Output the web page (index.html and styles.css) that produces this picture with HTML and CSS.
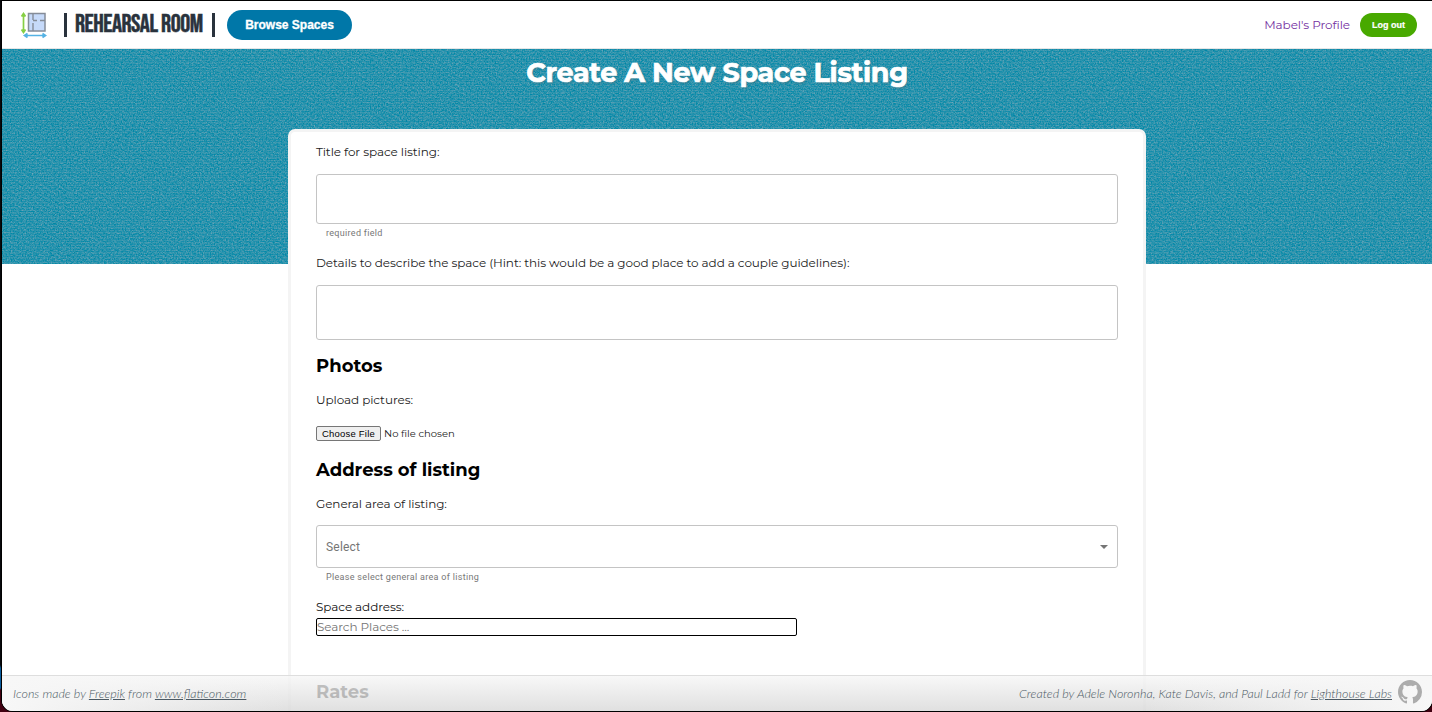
FILE: index.html
```html
<!DOCTYPE html>
<html lang="en">
<head>
<meta charset="utf-8">
<title>Rehearsal Room</title>
<link rel="stylesheet" href="styles.css">
</head>
<body>
<div class="window">
  <header class="navbar">
    <svg class="logo" viewBox="0 0 28 28" fill="none">
      <rect x="9.500" y="1.500" width="16.500" height="17.500" fill="#c6dafa" stroke="#858c98" stroke-width="1.500"/>
      <path d="M14 1v7m0 3v8M14 8.500h4m3 0h5" stroke="#858c98" stroke-width="1.400"/>
      <path d="M4.500 2v18M2.500 4.500l2-3 2 3M2.500 17.500l2 3 2-3" stroke="#86cf45" stroke-width="1.700"/>
      <path d="M6 23.500h20M8.500 21.500l-3 2 3 2M23.500 21.500l3 2-3 2" stroke="#55b2e4" stroke-width="1.700"/>
    </svg>
    <div class="brand"><span class="bar"></span><span class="brand-box"><span class="brand-name">REHEARSAL ROOM</span></span><span class="bar"></span></div>
    <button class="button browse">Browse Spaces</button>
    <a class="profile">Mabel's Profile</a>
    <button class="button logout">Log out</button>
  </header>
  <main class="page">
    <svg class="texture" width="1430" height="215">
      <filter id="weave" x="0" y="0" width="100%" height="100%" color-interpolation-filters="sRGB">
        <feTurbulence type="fractalNoise" baseFrequency=".73 .77" numOctaves="3" seed="4"/>
        <feColorMatrix values=".7 0 0 0 -.18  .18 0 0 0 .49  .12 0 0 0 .62  0 0 0 0 1"/>
      </filter>
      <pattern id="threads" width="8" height="5" patternUnits="userSpaceOnUse">
        <path d="M0 .5h5M3 2.500h5" stroke="#0086ad" stroke-opacity=".4"/>
        <path d="M1 3.500h4M5 1.500h3" stroke="#65a4b5" stroke-opacity=".3"/>
      </pattern>
      <rect width="1430" height="215" filter="url(#weave)"/>
      <rect width="1430" height="215" fill="url(#threads)"/>
    </svg>
    <h1 class="title">Create A New Space Listing</h1>
    <form class="card">
      <label class="label w-title">Title for space listing:</label>
      <div class="field field-title"></div>
      <p class="help w-required">required field</p>
      <label class="label w-details">Details to describe the space (Hint: this would be a good place to add a couple guidelines):</label>
      <div class="field field-details"></div>
      <h2 class="section photos">Photos</h2>
      <label class="label w-upload">Upload pictures:</label>
      <div class="file"><button class="choose" type="button">Choose File</button><span class="filename">No file chosen</span></div>
      <h2 class="section address">Address of listing</h2>
      <label class="label w-area">General area of listing:</label>
      <div class="field select"><span>Select</span><i class="caret"></i></div>
      <p class="help w-please">Please select general area of listing</p>
      <label class="label w-space">Space address:</label>
      <div class="search"><span>Search Places ...</span></div>
      <h2 class="section rates">Rates</h2>
    </form>
  </main>
  <footer class="footer">
    <p class="credit left">Icons made by <a>Freepik</a> from <a>www.flaticon.com</a></p>
    <p class="credit right">Created by Adele Noronha, Kate Davis, and Paul Ladd for <a>Lighthouse Labs</a></p>
    <svg class="github" viewBox="0 0 16 16"><path fill="#acacac" d="M8 0C3.580 0 0 3.580 0 8c0 3.540 2.290 6.530 5.470 7.590.4.070.55-.17.55-.38 0-.19-.01-.82-.01-1.490-2.010.37-2.530-.49-2.690-.94-.09-.23-.48-.94-.82-1.130-.28-.15-.68-.52-.01-.53.63-.01 1.080.58 1.230.82.72 1.210 1.870.87 2.330.66.07-.52.28-.87.51-1.070-1.780-.2-3.640-.89-3.640-3.950 0-.87.31-1.590.82-2.150-.08-.2-.36-1.020.08-2.120 0 0 .67-.21 2.200.82A7.600 7.600 0 0 1 8 3.860c.68 0 1.360.09 2 .27 1.530-1.040 2.200-.82 2.200-.82.44 1.100.16 1.920.08 2.120.51.56.82 1.270.82 2.150 0 3.070-1.870 3.750-3.650 3.950.29.25.54.73.54 1.480 0 1.070-.01 1.930-.01 2.200 0 .21.15.46.55.38A8.010 8.010 0 0 0 16 8c0-4.420-3.580-8-8-8z"/></svg>
  </footer>
</div>
</body>
</html>
```
FILE: styles.css
```css
* { box-sizing: border-box; }
body { margin: 0; width: 1432px; height: 712px; overflow: hidden; background: linear-gradient(#08090c 665px, #075a9b 668px 688px, #400010 690px); font-family: Montserrat, Inter, sans-serif; color: #222; }
h1, h2, p { margin: 0; }
.window { margin: 1px 0 0 2px; width: 1430px; height: 710px; background: #fff; border-radius: 0 0 11px 11px; overflow: hidden; box-shadow: 0 0 0 1px #000; position: relative; }
.navbar { height: 48px; display: flex; align-items: center; border-bottom: 1px solid #e6e6e6; }
.logo { width: 28px; height: 28px; margin: 2px 0 0 17px; flex: none; }
.brand { display: flex; align-items: center; margin-left: 17px; width: 151px; }
.bar { width: 3px; height: 24px; background: #29323c; flex: none; }
.brand-box { width: 129px; margin: 0 8px; flex: 1; height: 30px; }
.brand-name { display: block; width: max-content; font: 25px/30px "Bebas Neue", Roboto, sans-serif; color: #29323c; letter-spacing: -.46px; -webkit-text-stroke: .5px #29323c; }
.button { border: 0; color: #fff; font-family: "Liberation Sans", Arial, sans-serif; font-weight: bold; padding: 0; white-space: nowrap; flex: none; }
.browse { margin-left: 12px; width: 125px; height: 30px; border-radius: 15px; background: #0077a8; font-size: 12px; -webkit-text-stroke: .3px #fff; }
.profile { margin-left: auto; font-size: 12px; letter-spacing: -.07px; color: #74309f; }
.logout { width: 57px; height: 24px; margin: 0 15px 0 10px; border-radius: 12px; background: #48a900; font-size: 9px; -webkit-text-stroke: .2px #fff; }
.page { height: 662px; position: relative; }
.texture { position: absolute; left: 0; top: 0; z-index: 0; }
.title { position: relative; text-align: center; padding-top: 4px; color: #fff; font-size: 27px; line-height: 40px; font-weight: 700; height: 80px; -webkit-text-stroke: .7px #fff; letter-spacing: -.29px; text-shadow: 1px 2px 2px #426d7b66; }
.card { position: relative; margin: 0 0 0 286px; width: 858px; height: 610px; background: #fff; border: 3px solid #f4f4f4; border-radius: 7px; padding: 12px 25px 0; display: flex; flex-direction: column; }
.label { display: block; height: 16px; font-size: 12px; line-height: 16px; letter-spacing: -.08px; white-space: nowrap; }
.field { border: 1px solid #c4c4c4; border-radius: 3px; flex: none; }
.field-title { height: 50px; margin-top: 14px; }
.help { padding-left: 10px; margin: 4px 0 0; font: 9px/11px Roboto, sans-serif; letter-spacing: .31px; color: #777; }
.w-details { margin-top: 16px; }
.field-details { height: 55px; margin-top: 14px; }
.section { font-size: 18px; line-height: 24px; height: 24px; color: #000; font-weight: 700; }
.photos { margin-top: 14px; }
.w-upload { margin-top: 14px; }
.file { display: flex; height: 15px; margin-top: 18px; align-items: center; }
.choose { width: 65px; height: 15px; padding: 0; border: 1px solid #767676; border-radius: 2px; background: #efefef; font: 9.500px "Liberation Sans", Arial, sans-serif; letter-spacing: .2px; color: #000; }
.filename { margin-left: 3px; font-size: 10px; }
.address { margin-top: 17px; }
.w-area { margin-top: 14px; }
.select { height: 43px; margin-top: 13px; display: flex; align-items: center; justify-content: space-between; padding: 0 9px; font: 12px Roboto, sans-serif; letter-spacing: .2px; color: #757575; }
.caret { border: 4px solid transparent; border-top-color: #757575; border-bottom: 0; }
.w-space { margin-top: 16px; color: #111; }
.search { width: 481px; height: 18px; margin-top: 3px; border: 1px solid #000; border-radius: 2px; font-size: 12px; line-height: 16px; letter-spacing: -.08px; color: #757575; }
.rates { margin-top: 44px; }
.footer { position: absolute; left: 0; right: 0; bottom: 0; height: 36px; display: flex; align-items: center; border-top: 1px solid #dedede; background: linear-gradient(90deg, #f7f7f7, #f7f7f700 20% 80%, #f7f7f7), linear-gradient(#f6f6f6cc, #d8d8d8cc); }
.credit { font: italic 300 12.500px/18px Lato, sans-serif; color: #4b5963; white-space: nowrap; }
.credit a { text-decoration: underline; }
.left { margin-left: 11px; }
.right { margin-left: auto; }
.github { width: 24px; height: 24px; margin: -4px 10px 0 6px; }
```
